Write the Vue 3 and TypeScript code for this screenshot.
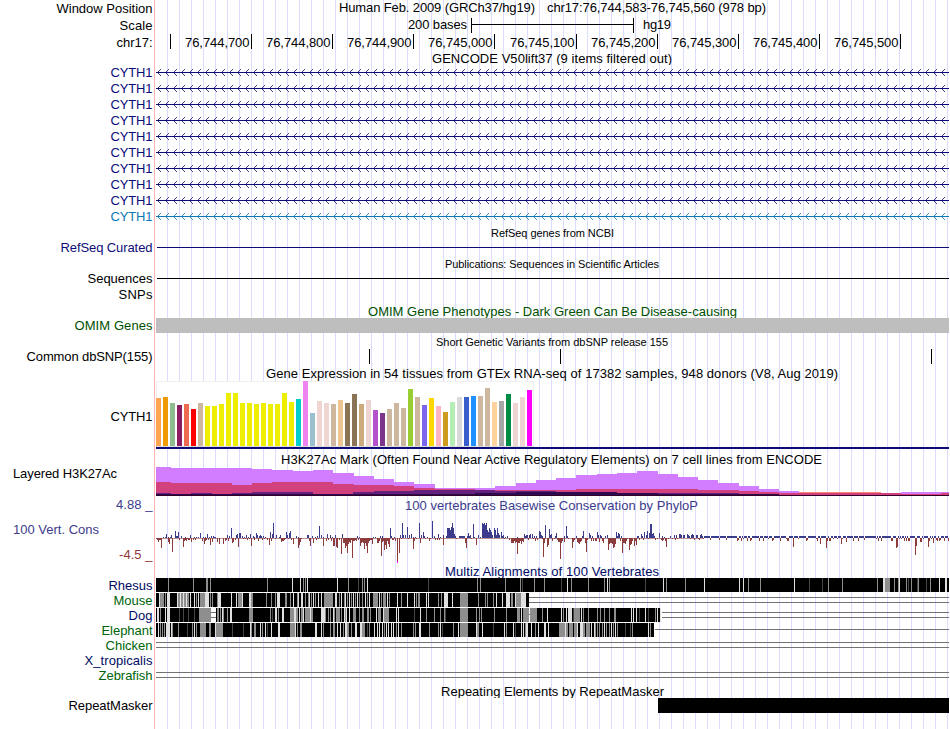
<script setup lang="ts">
interface Shape { d: string; fill: string; opacity?: number }
interface Label { t: string; x: number; y: number; w?: number; fill?: string; size?: number; end?: boolean }
interface Row { top: number; h: number; labels?: Label[]; shapes?: Shape[] }

const NAVY = '#0c0c78'
const BLUE = '#3c3c8c'
const RED = '#8c3c3c'
const GREEN = '#00640a'
const LEFT = 156
const RIGHT = 949

const box = (x: number, y: number, w: number, h: number): string => `M${x} ${y}h${w}v${h}h${-w}z`
const name = (t: string, y: number, w: number, fill = '#000'): Label => ({ t, x: 152.5 - w, y, w, fill })
const title = (top: number, h: number, t: string, x: number, w: number, y: number, fill = '#000', size = 13): Row =>
  ({ top, h, labels: [{ t, x, y, w, fill, size }] })
const wire = (y: number, x = LEFT): string => box(x, y, RIGHT - x, 1)

/* Gene models: a line with strand arrows every 8 px */
function gene(i: number): Row {
  const top = 65 + i * 16
  const y = top + 7
  const fill = i === 9 ? '#0c78b4' : NAVY
  let arms = ''
  for (let x = 157; x < RIGHT - 3; x += 8) {
    for (let k = 1; k <= 3; k++) arms += box(x + k, y - k, 1, 1) + box(x + k, y + k, 1, 1)
  }
  return {
    top, h: 16,
    labels: [name('CYTH1', y + 5, 42, fill)],
    shapes: [{ d: wire(y), fill }, { d: arms, fill, opacity: 0.8 }],
  }
}

/* Expression bars: colour and top edge */
const tissueTops = [84, 81, 99, 105, 102, 117, 99, 108, 108, 102, 69, 69, 99, 99, 102, 99, 102, 102, 69, 96, 87, 33, 129, 93, 99, 102, 90, 99, 72, 102, 90, 120, 129, 117, 99, 114, 57, 81, 105, 84, 108, 126, 96, 81, 81, 78, 78, 54, 96, 93, 72, 99, 81, 60]
const tissueColors = ('ffa54f ee9a00 8fbc8f 8b1c62 ee6a50 ff0000 cdb79e ' + 'eeee00 '.repeat(13)
  + '00cdcd ee82ee 9ac0cd eed5d2 eed5d2 cdb79e eec591 8b7355 8b7355 cdaa7d eed5d2 b452cd 7a378b cdb79e cdb79e cdb79e 9acd32 cdb79e 7a67ee ffd700 ffb6c1 cd9b1d b4eeb4 d9d9d9 3a5fcd 1e90ff cdb79e cdb79e ffd39b a6a6a6 008b45 eed5d2 eed5d2 ff00ff').split(' ')
const expression: Shape[] = [
  { d: box(156, 381, 378, 66), fill: '#f0f0f0' },
  { d: box(157, 382, 376, 64), fill: '#fff' },
  { d: box(156, 446, 378, 1), fill: '#dcdcdc' },
  ...tissueTops.map((t, i): Shape => ({ d: box(156 + i * 7, 370 + t / 3, 5, 76 - t / 3), fill: '#' + tissueColors[i] })),
  { d: box(156, 447, 793, 2), fill: NAVY },
]

/* Stepped signal: pairs of start x and top y, closed at the base line */
function steps(s: string, end = RIGHT): string {
  const p = s.split(' ').map((v) => v.split(',').map(Number))
  return p.map(([x, y], i) => {
    const x2 = p[i + 1] ? p[i + 1][0] : end
    return y < 496 ? box(x, y, x2 - x, 496 - y) : ''
  }).join('')
}
const acetylation: Shape[] = [
  { fill: '#d27dff', d: steps('156,467 171,468 252,469 272,470 293,471 313,470 333,473 354,476 374,479 394,482 414,484 435,488 495,486 516,483 536,480 556,478 576,475 597,474 617,473 637,471 658,474 678,477 698,480 718,483 739,486 759,489 779,491 799,496 901,492') },
  { fill: '#ff8278', d: steps('799,492 881,494') },
  { fill: '#d2417d', d: steps('156,482 171,483 232,485 252,483 272,482 333,484 354,485 394,486 414,488 435,489 475,491 495,490 516,490 576,489 698,490 739,491 759,492 779,493 901,494 941,493') },
  { fill: '#64207d', d: steps('156,493 171,495 191,493 212,494 232,493 252,492 313,494 353,492 374,491 414,490 475,490 495,491 556,492 617,493 698,493 739,494 779,495') },
  { fill: '#2d0a50', d: steps('156,494 475,493 516,492 617,493 658,494 779,495', 870) },
  { fill: '#320028', d: box(156, 495, 793, 1) },
]

/* Conservation scores: offset:height, offsets counted in thirds of a pixel */
const bars = (origin: number, s: string): number[][] =>
  s.split(' ').map((v) => { const [a, b] = v.split(':').map(Number); return [origin + Math.floor(a / 3), b] })
const gains = [
  ...bars(150, '39:1 45:1 49:4 54:1 61:1 64:3 76:7 79:2 82:2 85:6 94:2 106:1 121:3 133:1 139:1 145:1 151:5 160:1 166:1 172:4 178:1 184:2 190:2 193:1 196:1 232:3 238:2 244:10 259:3 262:4 268:5 271:5 277:2 283:1 289:3 295:1 301:4 310:2 313:1 319:5 322:3 328:2 331:3 334:2 340:2 346:1 361:6 367:4 370:15 379:3 388:1 391:3 409:6 412:3 418:5 421:7 439:2 445:1 472:3 475:3 487:2 496:1 502:2 508:12 514:3 520:1 532:4 541:3 547:1 556:3 577:4'),
  ...bars(345, '37:2 43:1 85:1 91:1 105:2 112:2 136:10 139:2 148:1 166:3 172:15 175:3 181:3 187:11 193:3 199:4 205:1 211:1 223:15 229:3 235:6 238:2 247:1 262:17 268:2 280:4 286:1 295:3 304:2 307:10 310:10 313:10 316:8 319:11 322:15 325:10 328:4 331:2 343:2 346:2 349:2 352:2 355:2 358:2 367:2 370:5 373:2 376:3 385:14 388:1 400:3 406:1 412:15 415:14 418:15 421:13 424:15 427:8 430:6 433:10 436:8 439:6 442:3 448:10 451:8 454:3 457:10 460:5 463:3 469:6 472:2 475:3 481:1 487:2 517:1 538:4 541:2 544:3 547:3 553:3 556:4 562:4 568:2 574:2 583:7 586:6 589:3 592:2'),
  ...bars(540, '4:2 16:13 28:9 31:3 34:4 46:2 49:5 73:2 79:12 82:2 109:2 127:2 130:7 148:5 151:3 157:2 172:6 175:3 181:3 184:2 196:2 202:3 229:6 232:2 235:5 238:4 244:2 292:2 295:2 304:4 307:2 313:6 319:3 322:7 328:5 331:14 334:14 337:4 340:5 343:2 358:5 367:2 373:1 391:2 403:3 409:3 418:4 421:4 424:3 430:3 433:3 442:4 445:3 448:2 454:3 457:4 460:3 469:3 472:3 481:3 484:4 487:2'),
]
const losses = [
  ...bars(150, '19:1 22:2 25:4 28:2 31:2 34:10 55:4 58:6 67:14 88:2 100:9 103:3 106:2 109:3 112:1 115:2 118:2 124:4 130:2 136:2 157:3 163:6 166:3 169:2 175:2 181:7 187:4 202:4 208:6 220:6 226:3 229:2 235:3 247:5 250:4 256:2 265:9 280:1 286:1 292:2 298:1 304:8 313:2 325:3 337:2 343:1 352:2 358:7 364:3 376:1 394:4 397:3 400:3 403:2 406:1 415:1 424:2 430:6 445:10 448:7 451:4 454:1 478:3 481:8 490:5 499:2 505:1 520:8 529:3 535:2 544:3 550:8 553:8 559:9 562:10 568:2 574:16 580:5 583:5 586:10 589:8 592:15'),
  ...bars(345, '1:10 4:6 7:15 10:6 13:4 16:5 19:2 22:20 25:3 28:3 31:2 34:3 40:2 46:8 49:5 52:4 55:5 58:11 61:5 64:8 67:15 70:5 73:3 76:2 79:2 82:6 97:5 100:5 103:3 109:18 112:4 115:3 118:12 121:7 124:11 127:3 130:6 133:9 142:2 145:2 151:3 157:23 163:15 169:1 190:1 205:11 208:3 214:1 226:5 241:1 253:3 256:1 271:2 277:2 283:2 295:7 334:1 361:5 364:10 379:1 394:7 478:1 493:2 499:5 502:5 505:5 508:3 511:5 514:4 517:16 520:5 523:5 526:3 529:6 532:3 535:4 550:2 565:1 571:3 577:2 595:19'),
  ...bars(540, '7:1 10:19 13:5 22:9 25:7 37:3 43:1 52:2 55:4 58:4 61:21 64:5 67:3 73:4 85:1 97:10 100:4 103:2 112:4 115:5 118:6 121:4 124:3 136:5 139:14 142:2 154:3 160:3 166:3 169:3 178:4 187:3 190:5 205:12 208:6 211:5 214:5 217:6 220:10 223:9 226:6 241:3 247:15 250:5 253:5 256:6 259:3 262:1 268:12 271:7 274:6 277:3 283:8 286:3 289:7 298:2 310:2 325:1 346:2 352:1 364:2 367:3 370:2 376:3 379:9 385:1 397:1 406:2 412:1 451:1 463:2 475:1 478:2 490:1 511:2 538:2 559:2'),
  ...bars(735, '7:3 10:2 19:3 25:1 37:3 46:3 49:2 73:3 85:3 100:1 112:3 115:2 136:3 154:1 157:3 160:3 175:9 190:1 214:3 217:2 244:1 247:3 256:6 274:10 277:3 283:3 286:3 295:1 307:1 319:6 322:1 334:4 355:3 370:3 388:2 424:1 430:3 439:3 469:3 472:3 484:10 487:9 493:1 499:1 508:3 514:3 520:3 523:3 541:17 544:8 556:4 559:4 565:1 580:9 583:3 589:1 595:5 604:2 607:3 613:3 616:2 628:3 640:3'),
]
const lossColumns = new Set(losses.map(([x]) => x))
let plateau = ''
for (let x = 703; x < RIGHT; x++) if (!lossColumns.has(x)) plateau += box(x, 536, 1, 2)
const conservation: Shape[] = [
  { d: box(156, 538, 547, 1), fill: RED, opacity: 0.55 },
  { d: gains.map(([x, h]) => box(x, 538 - h, 1, h)).join('') + plateau, fill: BLUE },
  { d: losses.map(([x, h]) => box(x, 538, 1, h)).join(''), fill: RED },
  { d: box(397, 561, 1, 2), fill: '#ff00ff' },
]

/* Alignment blocks: black band with shaded stripes; each stripe is offset, shade and optional end */
const shades: Record<string, string> = { g: '#8e8e8e', d: '#464646', w: '#e0e0e0' }
function stripes(y: number, end: number, groups: [number, string][]): Shape[] {
  const out: Record<string, string> = { g: '', d: '', w: '' }
  for (const [origin, s] of groups) {
    for (const item of s.split(' ')) {
      const m = /^(\d+)([gdw])(\d*)$/.exec(item)
      if (!m) continue
      const a = Math.floor(+m[1] / 3)
      const b = m[3] ? Math.max(a + 1, Math.round(+m[3] / 3)) : a + 1
      out[m[2]] += box(origin + a, y, b - a, 14)
    }
  }
  return [{ d: box(LEFT, y, end - LEFT, 14), fill: '#000' },
    ...Object.keys(out).map((k): Shape => ({ d: out[k], fill: shades[k] }))]
}
const grey = (d: string): Shape => ({ d, fill: '#737373' })

const rhesus = stripes(578, 949, [
  [150, '55g 130g 168g174 181g 352g 427w 451w 460g 466g 472w 562w 595g'],
  [345, '40d 52g 58g 67w 250d 397g 406g 481g 526g 532d 568g'],
  [540, '13g 64d 82w 93g 145g 193g 202w 208g 316d 370w 379g 436g 494w'],
  [735, '13w 25w 40g 76g 178w 223d 262d 280g 322g 427g 445w450 450g465 478g 490g 493w 514g 520d 529g 547d 550g 574d 586g 613w 630w636']])
const mouse = stripes(593, 529, [
  [150, '27w30 30g42 46g 51w60 81w 84g91 91w 94g100 100w 103g109 109w 112g118 121w 133w 139g 145w 151g166 166w178 181g 187g 202g 204w213 243w 258w 264g 267g276 276w 297w303 303g309 349g 365g 375g 382w390 405g411 420g424 430w 442g 445w 454w460 466g 475g 478w 484g 490w 496g 505w 514w 522g534 535g548 556w562 568g 574w 582g'],
  [345, '1w 7g 13w 19g 25w 31g 37w 43g 52g 60w 66g 73w 85g100 103w 109g 115g124 127w 133g 157w 169g 187w 208w 214g 220g226 244w 250w 280g 289g 298w308 322w 346g369 400g 421g 427g 445g 454w 472w 484w 487w496 499g505 510w 515g528 528w543']])
const dog = [
  ...stripes(608, 661, [
    [150, '21w27 30g 47w 52w60 88d 100d 115d 133d 148g183 201g207 211g 216w219 219g223 231g 240w246 297g309 361g 367d 376w382 384g 397w403 420g432 432w438 438g444 448w 454g462 460w 466g474 475g480 481w 484g490 514w525 526g 534g 540g 550w 553g 560g570 574g 583w 590g'],
    [345, '1g 5w 12w 25g34 43g 52g58 67g73 76g 93w97 99g109 114w 118g133 154w 160w 208d 226w 244g 268g 286g 298g 301d 346g369 394g 403g 409g 448g 484g 517g525 529w 535g551 555g576'],
    [540, '7g 21w24 64w 70g 79w 85w96 100d 103g120 124w 130g 145g 172g 180g 193g 208g 223g229 274w 280w 289w 298d 316w 325d 346g 352w 360w363']]),
  { d: box(211, 608, 5, 14) + box(529, 608, 1, 14), fill: '#fff' },
  grey(box(211, 612, 5, 1) + box(211, 617, 5, 1) + box(529, 614, 1, 1)),
]
const elephant = stripes(623, 654, [
  [150, '24w27 30g 36g 42g 49w 51w60 64w 67g 85g 112d 127g 133w 139g 150g168 178g184 195w 198g219 246d 280d 300w 303g 313g318 330w 336g 345w 352d 364w367 385w389 420g435 435w 442g 450g456 495w501 514w 520g 541g 550g556 562w 571w 580g 590g597'],
  [345, '1w5 19g 31w37 45w52 52g60 66d 73g 88w91 97w 103w 112w 118g 124w 130w 139w 145w 154g 160w 169g 205g 211g 223w228 253g 280g 286w 292d 325g 340w 346g369 394w 397g403 412w 445d 478w 484g 505w 511d 529w 535w 541g 544w549 559w 571g 580w'],
  [540, '12w18 25w 57g75 76w 79g85 88g98 102g112 113w 121w129 130g136 138g150 154w 163w 166g 172g 178g 187g 193w 199g 208g 214w 220g 226w 231g 256d 271d 277g 325w 331g']])

const species = (i: number, t: string, w: number, fill: string, shapes: Shape[]): Row =>
  ({ top: 578 + i * 15, h: 15, labels: [name(t, 590 + i * 15, w, fill)], shapes })

const ticks = [170, 251, 332, 413, 494, 576, 657, 738, 819, 900]
const positions = ['76,744,700', '76,744,800', '76,744,900', '76,745,000', '76,745,100', '76,745,200', '76,745,300', '76,745,400', '76,745,500']

const rows: Row[] = [
  { top: 0, h: 17, labels: [name('Window Position', 13, 96),
    { t: 'Human Feb. 2009 (GRCh37/hg19)', x: 339, y: 12, w: 196 },
    { t: 'chr17:76,744,583-76,745,560 (978 bp)', x: 547, y: 12, w: 219 }] },
  { top: 17, h: 16, labels: [name('Scale', 30, 33), { t: '200 bases', x: 408, y: 29, w: 59 }, { t: 'hg19', x: 643, y: 29, w: 28 }],
    shapes: [{ d: box(471, 18, 1, 15) + box(633, 18, 1, 15) + box(471, 24, 162, 1), fill: '#000' }] },
  { top: 33, h: 17, labels: [name('chr17:', 47, 36), ...positions.map((t, i): Label => ({ t, x: ticks[i + 1] - 66, y: 47, w: 64.5 }))],
    shapes: [{ d: ticks.map((x) => box(x, 34, 1, 15)).join(''), fill: '#000' }] },
  title(50, 15, 'GENCODE V50lift37 (9 items filtered out)', 432, 240, 63),
  ...Array.from({ length: 10 }, (_, i) => gene(i)),
  title(225, 15, 'RefSeq genes from NCBI', 491, 123, 237, '#000', 11),
  { top: 240, h: 16, labels: [name('RefSeq Curated', 252, 92, NAVY)], shapes: [{ d: wire(247, 157), fill: NAVY }] },
  title(256, 15, 'Publications: Sequences in Scientific Articles', 445, 214, 268, '#000', 11),
  { top: 271, h: 16, labels: [name('Sequences', 283, 65)], shapes: [{ d: wire(278, 157), fill: '#000' }] },
  { top: 287, h: 16, labels: [name('SNPs', 299, 34)] },
  title(303, 15, 'OMIM Gene Phenotypes - Dark Green Can Be Disease-causing', 368, 369, 316, '#005000'),
  { top: 318, h: 16, labels: [name('OMIM Genes', 330, 78, '#005000')], shapes: [{ d: box(156, 318, 793, 15), fill: '#bebebe' }] },
  title(334, 15, 'Short Genetic Variants from dbSNP release 155', 436, 232, 346, '#000', 11),
  { top: 349, h: 16, labels: [name('Common dbSNP(155)', 361, 126)],
    shapes: [{ d: [369, 560, 931].map((x) => box(x, 349, 1, 15)).join(''), fill: '#000' }] },
  title(365, 16, 'Gene Expression in 54 tissues from GTEx RNA-seq of 17382 samples, 948 donors (V8, Aug 2019)', 266, 572, 378),
  { top: 381, h: 68, labels: [name('CYTH1', 421, 42)], shapes: expression },
  title(449, 18, 'H3K27Ac Mark (Often Found Near Active Regulatory Elements) on 7 cell lines from ENCODE', 281, 541, 464),
  { top: 467, h: 30, labels: [{ t: 'Layered H3K27Ac', x: 13, y: 478, w: 104 }], shapes: acetylation },
  { top: 497, h: 17, labels: [name('4.88 _', 509, 36.5, BLUE),
    { t: '100 vertebrates Basewise Conservation by PhyloP', x: 405, y: 510, w: 293, fill: BLUE }] },
  { top: 514, h: 49, labels: [{ t: '100 Vert. Cons', x: 13, y: 534, w: 86, fill: BLUE }, name('-4.5 _', 559, 33.5, RED)], shapes: conservation },
  title(563, 15, 'Multiz Alignments of 100 Vertebrates', 445, 214, 576, '#000a64'),
  species(0, 'Rhesus', 44, '#000a64', rhesus),
  species(1, 'Mouse', 39, GREEN, [...mouse, grey(wire(597, 529) + wire(602, 529))]),
  species(2, 'Dog', 24, '#000a64', [...dog, grey(wire(612, 662) + wire(617, 662))]),
  species(3, 'Elephant', 51, GREEN, [...elephant, grey(wire(629, 655))]),
  species(4, 'Chicken', 47, GREEN, [grey(wire(642) + wire(647))]),
  species(5, 'X_tropicalis', 68, '#000a64', []),
  species(6, 'Zebrafish', 54, GREEN, [grey(wire(672) + wire(677))]),
  title(683, 15, 'Repeating Elements by RepeatMasker', 441, 223, 696),
  { top: 698, h: 31, labels: [name('RepeatMasker', 710, 84)], shapes: [{ d: box(658, 698, 291, 15), fill: '#000' }] },
]
</script>

<template>
  <main class="browser">
    <svg v-for="row in rows" :key="row.top" class="track" width="950" :height="row.h" :viewBox="`0 ${row.top} 950 ${row.h}`">
      <path v-for="(s, i) in row.shapes" :key="i" :d="s.d" :fill="s.fill" :opacity="s.opacity ?? 1" />
      <text v-for="(l, i) in row.labels" :key="'t' + i" :x="l.x" :y="l.y" :textLength="l.w" :font-size="l.size ?? 13" :fill="l.fill ?? '#000'">{{ l.t }}</text>
    </svg>
  </main>
</template>

<style>
body {
  margin: 0;
  background: #fff;
}
</style>

<style scoped>
.browser {
  display: flex;
  flex-direction: column;
  width: 950px;
  height: 729px;
  overflow: hidden;
  background:
    linear-gradient(#ffb4b4, #ffb4b4) 154px 0 / 1px 100% no-repeat,
    linear-gradient(#fff, #fff) 0 0 / 156px 100% no-repeat,
    linear-gradient(to right, #dcdcff 1px, transparent 1px) 11px 0 / 12px 100% repeat-x;
}

.track {
  display: block;
  flex: none;
  overflow: hidden;
  font-family: "Liberation Sans", Arial, sans-serif;
  shape-rendering: crispEdges;
}
</style>
